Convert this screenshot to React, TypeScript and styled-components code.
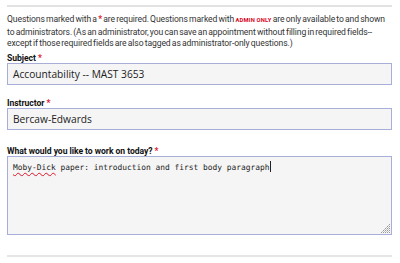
import React from "react";
import styled, { createGlobalStyle } from "styled-components";

const GlobalStyle = createGlobalStyle`
  html, body {
    margin: 0;
    padding: 0;
    background: #ffffff;
  }
  body {
    font-family: "Open Sans", "Liberation Sans", sans-serif;
    color: #222222;
  }
`;

const Page = styled.div`
  padding: 5px 8px 0 7px;
  width: 400px;
  box-sizing: border-box;
`;

const Rule = styled.div`
  height: 2px;
  background: #e2e2e2;
`;

const Intro = styled.p`
  margin: 7px 0 0;
  font-family: Roboto, "Open Sans", sans-serif;
  font-size: 8.6px;
  letter-spacing: -0.1px;
  word-spacing: -0.8px;
  line-height: 11.5px;
  color: #333333;
`;

const AdminTag = styled.span`
  color: #d9001b;
  font-weight: 700;
  font-size: 5.8px;
  letter-spacing: 0.2px;
  word-spacing: 0;
  text-transform: uppercase;
`;

const Star = styled.span`
  color: #e0142a;
  font-weight: 700;
`;

const Field = styled.div<{ $gap: number }>`
  margin-top: ${({ $gap }) => $gap}px;
  display: flex;
  flex-direction: column;
`;

const Label = styled.label`
  font-family: Roboto, "Open Sans", sans-serif;
  font-size: 8.6px;
  font-weight: 700;
  letter-spacing: -0.05px;
  line-height: 10px;
  color: #111111;
`;

const Input = styled.div`
  height: 22px;
  box-sizing: border-box;
  border: 1px solid #a7afd9;
  background: #f5f5f5;
  padding: 0 5px;
  display: flex;
  align-items: center;
  font-size: 10.2px;
  color: #222222;
`;

const TextArea = styled.div`
  position: relative;
  height: 79px;
  box-sizing: border-box;
  border: 1px solid #a7afd9;
  background: #f5f5f5;
  padding: 4px 5px;
  font-family: "DejaVu Sans Mono", "Liberation Mono", monospace;
  font-size: 7.9px;
  line-height: 12px;
  color: #222222;
`;

const Misspelled = styled.span`
  text-decoration: underline wavy #e0142a;
  text-decoration-thickness: 0.6px;
  text-underline-offset: 2px;
`;

const Caret = styled.span`
  display: inline-block;
  width: 1px;
  height: 11px;
  background: #222222;
  vertical-align: -2px;
`;

const Grip = styled.svg`
  position: absolute;
  right: 1px;
  bottom: 1px;
`;

const BottomRule = styled.div`
  margin-top: 20px;
  height: 2px;
  background: #e6e6e6;
`;

const ResizeGrip = () => (
  <Grip width="9" height="9" viewBox="0 0 9 9">
    {[
      [8, 0], [6, 2], [8, 2], [4, 4], [6, 4], [8, 4],
      [2, 6], [4, 6], [6, 6], [8, 6], [0, 8], [2, 8], [4, 8], [6, 8], [8, 8],
    ].map(([x, y]) => (
      <rect key={`${x}-${y}`} x={x} y={y} width="1" height="1" fill="#999" />
    ))}
    {[
      [7, 1], [5, 3], [7, 3], [3, 5], [5, 5], [7, 5],
      [1, 7], [3, 7], [5, 7], [7, 7],
    ].map(([x, y]) => (
      <rect key={`b${x}-${y}`} x={x} y={y} width="1" height="1" fill="#c4c4c4" />
    ))}
  </Grip>
);

export default function App() {
  return (
    <>
      <GlobalStyle />
      <Page>
        <Rule />
        <Intro>
          Questions marked with a <Star>*</Star> are required. Questions marked with{" "}
          <AdminTag>Admin only</AdminTag> are only available to and shown to
          administrators. (As an administrator, you can save an appointment without
          filling in required fields--except if those required fields are also tagged
          as administrator-only questions.)
        </Intro>

        <Field $gap={3}>
          <Label>
            Subject <Star>*</Star>
          </Label>
          <Input>Accountability -- MAST 3653</Input>
        </Field>

        <Field $gap={13}>
          <Label>
            Instructor <Star>*</Star>
          </Label>
          <Input>Bercaw-Edwards</Input>
        </Field>

        <Field $gap={16}>
          <Label>
            What would you like to work on today? <Star>*</Star>
          </Label>
          <TextArea>
            <Misspelled>Moby-Dick</Misspelled> paper: introduction and first body
            paragraph
            <Caret />
            <ResizeGrip />
          </TextArea>
        </Field>

        <BottomRule />
      </Page>
    </>
  );
}
